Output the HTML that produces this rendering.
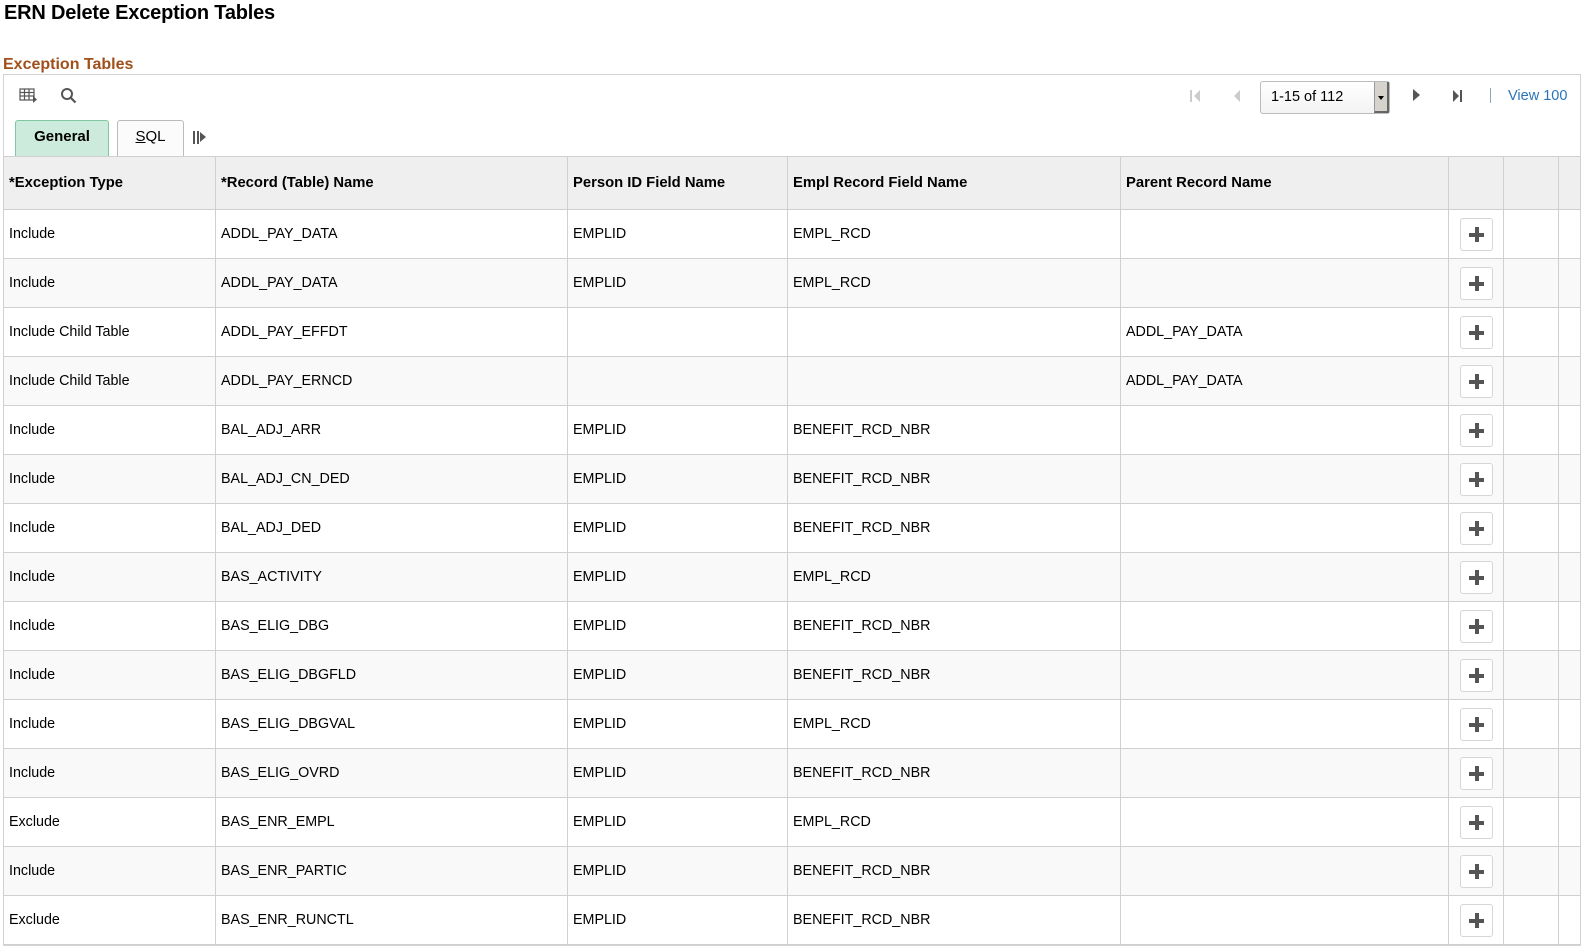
<!DOCTYPE html>
<html><head><meta charset="utf-8"><style>
*{box-sizing:border-box;margin:0;padding:0}
body{width:1594px;height:951px;background:#fff;font-family:"Liberation Sans",Arial,sans-serif;color:#000;position:relative;overflow:hidden}
.abs{position:absolute}
h1{position:absolute;left:4px;top:2px;font-size:20px;font-weight:bold;letter-spacing:-0.2px}
.sec{position:absolute;left:3px;top:56px;font-size:16px;font-weight:bold;color:#a0501a}
.frame{position:absolute;left:3px;top:74px;width:1578px;height:872px;border:1px solid #d4d4d4}
table{position:absolute;left:3px;top:156px;border-collapse:collapse;table-layout:fixed;width:1577px}
td,th{border:1px solid #d0d0d0;font-size:14.3px;text-align:left;padding:0 0 0 5px;vertical-align:middle;white-space:nowrap}
th{background:#efefef;height:53px;font-weight:bold;font-size:14.8px}
td{height:49px}
tr:nth-child(odd) td{background:#f9f9f9}
.btn{width:33px;height:33px;border:1px solid #d6d6d6;border-radius:3px;background:#fff;margin-left:6px;position:relative}
.btn:before{content:"";position:absolute;left:8px;top:14px;width:15px;height:4px;background:#555}
.btn:after{content:"";position:absolute;left:14px;top:8px;width:4px;height:15px;background:#555}
.tab{position:absolute;top:120px;height:36px;border:1px solid #bbb;border-bottom:none;border-radius:3px 3px 0 0;font-size:15px;text-align:center;line-height:32px}
</style></head><body>
<h1>ERN Delete Exception Tables</h1>
<div class="sec">Exception Tables</div>
<div class="frame"></div>
<svg class="abs" style="left:19px;top:87px" width="20" height="18" viewBox="0 0 20 18"><g fill="none" stroke="#555" stroke-width="1.2"><rect x="1" y="2" width="14" height="11"/><line x1="1" y1="5.5" x2="15" y2="5.5"/><line x1="1" y1="9" x2="15" y2="9"/><line x1="5.5" y1="2" x2="5.5" y2="13"/><line x1="10" y1="2" x2="10" y2="13"/></g><path d="M14 9 L18 12.5 L14 16Z" fill="#555"/></svg>
<svg class="abs" style="left:60px;top:87px" width="18" height="18" viewBox="0 0 18 18"><circle cx="7" cy="7" r="5" fill="none" stroke="#555" stroke-width="2"/><line x1="10.5" y1="10.5" x2="15.5" y2="15.5" stroke="#555" stroke-width="2.2"/></svg>
<div class="tab" style="left:15px;width:94px;background:#cdebdc;border-color:#7ec7a1;font-weight:bold">General</div>
<div class="tab" style="left:117px;width:67px;background:#fbfbfb;border-color:#bbb"><u>S</u>QL</div>
<div class="abs" style="left:193px;top:131px;width:2px;height:13px;background:#555"></div>
<div class="abs" style="left:197px;top:131px;width:2px;height:13px;background:#555"></div>
<div class="abs" style="left:200px;top:132px;width:0;height:0;border-left:6px solid #555;border-top:5.5px solid transparent;border-bottom:5.5px solid transparent"></div>
<div class="abs" style="left:1190px;top:90px;width:2px;height:12px;background:#ccc"></div>
<div class="abs" style="left:1194px;top:90px;border-right:6px solid #ccc;border-top:6px solid transparent;border-bottom:6px solid transparent"></div>
<div class="abs" style="left:1234px;top:90px;border-right:6px solid #ccc;border-top:6px solid transparent;border-bottom:6px solid transparent"></div>
<div class="abs" style="left:1260px;top:81px;width:130px;height:33px;border:1px solid #bbb;border-radius:3px;background:linear-gradient(#fff,#f3f3f3);font-size:14.5px;line-height:30px;padding-left:10px">1-15 of 112</div>
<div class="abs" style="left:1374px;top:82px;width:15px;height:31px;background:#d6d3cc;border-left:1px solid #999;border-right:2px solid #666;border-bottom:2px solid #666"></div>
<div class="abs" style="left:1378px;top:96px;border-top:4px solid #000;border-left:3.5px solid transparent;border-right:3.5px solid transparent"></div>
<div class="abs" style="left:1413px;top:89px;border-left:7px solid #555;border-top:6.5px solid transparent;border-bottom:6.5px solid transparent"></div>
<div class="abs" style="left:1453px;top:90px;border-left:6px solid #555;border-top:6px solid transparent;border-bottom:6px solid transparent"></div>
<div class="abs" style="left:1460px;top:90px;width:2px;height:12px;background:#555"></div>
<div class="abs" style="left:1490px;top:88px;width:1px;height:15px;background:#8ab"></div>
<div class="abs" style="left:1508px;top:88px;font-size:14.5px;color:#2a73b8">View 100</div>
<table>
<colgroup><col style="width:212px"><col style="width:352px"><col style="width:220px"><col style="width:333px"><col style="width:328px"><col style="width:55px"><col style="width:55px"><col style="width:22px"></colgroup>
<tr><th>*Exception Type</th><th>*Record (Table) Name</th><th>Person ID Field Name</th><th>Empl Record Field Name</th><th>Parent Record Name</th><th></th><th></th><th></th></tr>
<tr><td>Include</td><td>ADDL_PAY_DATA</td><td>EMPLID</td><td>EMPL_RCD</td><td></td><td><div class="btn"></div></td><td></td><td></td></tr>
<tr><td>Include</td><td>ADDL_PAY_DATA</td><td>EMPLID</td><td>EMPL_RCD</td><td></td><td><div class="btn"></div></td><td></td><td></td></tr>
<tr><td>Include Child Table</td><td>ADDL_PAY_EFFDT</td><td></td><td></td><td>ADDL_PAY_DATA</td><td><div class="btn"></div></td><td></td><td></td></tr>
<tr><td>Include Child Table</td><td>ADDL_PAY_ERNCD</td><td></td><td></td><td>ADDL_PAY_DATA</td><td><div class="btn"></div></td><td></td><td></td></tr>
<tr><td>Include</td><td>BAL_ADJ_ARR</td><td>EMPLID</td><td>BENEFIT_RCD_NBR</td><td></td><td><div class="btn"></div></td><td></td><td></td></tr>
<tr><td>Include</td><td>BAL_ADJ_CN_DED</td><td>EMPLID</td><td>BENEFIT_RCD_NBR</td><td></td><td><div class="btn"></div></td><td></td><td></td></tr>
<tr><td>Include</td><td>BAL_ADJ_DED</td><td>EMPLID</td><td>BENEFIT_RCD_NBR</td><td></td><td><div class="btn"></div></td><td></td><td></td></tr>
<tr><td>Include</td><td>BAS_ACTIVITY</td><td>EMPLID</td><td>EMPL_RCD</td><td></td><td><div class="btn"></div></td><td></td><td></td></tr>
<tr><td>Include</td><td>BAS_ELIG_DBG</td><td>EMPLID</td><td>BENEFIT_RCD_NBR</td><td></td><td><div class="btn"></div></td><td></td><td></td></tr>
<tr><td>Include</td><td>BAS_ELIG_DBGFLD</td><td>EMPLID</td><td>BENEFIT_RCD_NBR</td><td></td><td><div class="btn"></div></td><td></td><td></td></tr>
<tr><td>Include</td><td>BAS_ELIG_DBGVAL</td><td>EMPLID</td><td>EMPL_RCD</td><td></td><td><div class="btn"></div></td><td></td><td></td></tr>
<tr><td>Include</td><td>BAS_ELIG_OVRD</td><td>EMPLID</td><td>BENEFIT_RCD_NBR</td><td></td><td><div class="btn"></div></td><td></td><td></td></tr>
<tr><td>Exclude</td><td>BAS_ENR_EMPL</td><td>EMPLID</td><td>EMPL_RCD</td><td></td><td><div class="btn"></div></td><td></td><td></td></tr>
<tr><td>Include</td><td>BAS_ENR_PARTIC</td><td>EMPLID</td><td>BENEFIT_RCD_NBR</td><td></td><td><div class="btn"></div></td><td></td><td></td></tr>
<tr><td>Exclude</td><td>BAS_ENR_RUNCTL</td><td>EMPLID</td><td>BENEFIT_RCD_NBR</td><td></td><td><div class="btn"></div></td><td></td><td></td></tr>
</table>
</body></html>
